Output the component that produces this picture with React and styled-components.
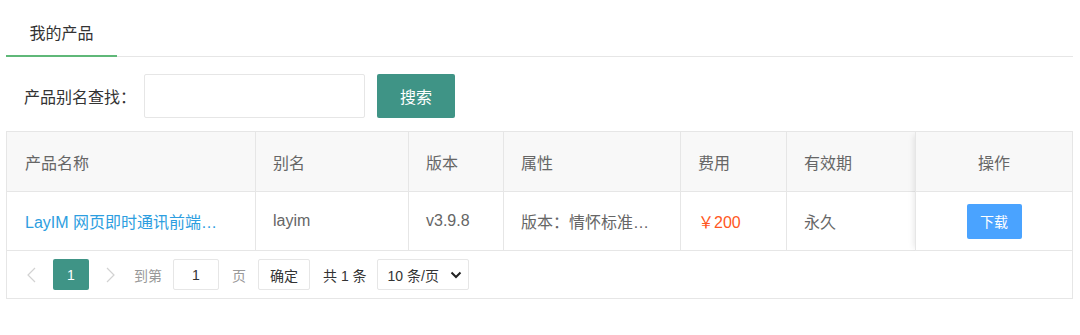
import React from "react";
import styled, { createGlobalStyle } from "styled-components";

const GlobalStyle = createGlobalStyle`
  body {
    margin: 0;
    background: #fff;
    font-family: "Liberation Sans", "Noto Sans CJK SC", sans-serif;
    color: #333;
  }
`;

const Page = styled.div`
  width: 1067px;
  margin-left: 6px;
`;

const TabBar = styled.div`
  display: flex;
  height: 56px;
  border-bottom: 1px solid #e6e6e6;
`;

const Tab = styled.div`
  box-sizing: border-box;
  width: 111px;
  height: 57px;
  padding-top: 22px;
  line-height: 23px;
  text-align: center;
  font-size: 16px;
  color: #333;
  border-bottom: 2px solid #5fb878;
`;

const SearchRow = styled.div`
  display: flex;
  align-items: center;
  margin-top: 17px;
  padding-left: 18px;
  height: 44px;
`;

const Label = styled.label`
  width: 120px;
  font-size: 16px;
  color: #333;
`;

const SearchInput = styled.input`
  box-sizing: border-box;
  width: 221px;
  height: 44px;
  border: 1px solid #e6e6e6;
  border-radius: 2px;
  outline: none;
`;

const TealButton = styled.button`
  margin-left: 12px;
  width: 78px;
  height: 44px;
  border: none;
  border-radius: 2px;
  background: #3f9486;
  color: #fff;
  font-size: 16px;
  font-family: inherit;
`;

const Table = styled.div`
  margin-top: 13px;
  border: 1px solid #e6e6e6;
`;

const Body = styled.div`
  display: flex;
  overflow: hidden;
`;

const Main = styled.div`
  display: grid;
  grid-template-columns: 249px 153px 95px 177px 106px 128px;
  grid-template-rows: 60px 59px;
`;

const Cell = styled.div`
  display: flex;
  align-items: center;
  box-sizing: border-box;
  padding: 0 ${(p) => (p.$padRight ? p.$padRight : 17)}px 0 ${(p) => (p.$padLeft ? p.$padLeft : 17)}px;
  font-size: 16px;
  color: #666;
  background: ${(p) => (p.$head ? "#f8f8f8" : "#fff")};
  border-right: ${(p) => (p.$last ? "none" : "1px solid #e6e6e6")};
  border-bottom: 1px solid #e6e6e6;
  justify-content: ${(p) => (p.$center ? "center" : "flex-start")};
  min-width: 0;
`;

const Ellipsis = styled.span`
  display: block;
  max-width: ${(p) => p.$max}px;
  overflow: hidden;
  white-space: nowrap;
  text-overflow: ellipsis;
`;

const LinkText = styled(Ellipsis)`
  color: #2d9ee0;
`;

const Price = styled.span`
  color: #ff5722;
  white-space: nowrap;
`;

const Fixed = styled.div`
  display: grid;
  grid-template-rows: 60px 59px;
  width: 158px;
  box-sizing: border-box;
  border-left: 1px solid #e6e6e6;
  box-shadow: -4px 0 6px -3px rgba(0, 0, 0, 0.1);
  position: relative;
`;

const BlueButton = styled.button`
  width: 55px;
  height: 35px;
  border: none;
  border-radius: 2px;
  background: #4aa3ff;
  color: #fff;
  font-size: 14px;
  font-family: inherit;
`;

const Pager = styled.div`
  display: flex;
  align-items: center;
  height: 47px;
  font-size: 14px;
  color: #333;
`;

const Arrow = styled.span`
  display: flex;
  justify-content: center;
  width: 24px;
  margin-left: ${(p) => p.$ml}px;
`;

const Current = styled.span`
  display: flex;
  align-items: center;
  justify-content: center;
  width: 36px;
  height: 31px;
  margin-left: 10px;
  border-radius: 2px;
  background: #3f9486;
  color: #fff;
`;

const PagerText = styled.span`
  margin-left: ${(p) => p.$ml}px;
  color: ${(p) => (p.$muted ? "#999" : "#333")};
`;

const PagerBox = styled.span`
  display: flex;
  align-items: center;
  justify-content: ${(p) => (p.$between ? "space-between" : "center")};
  box-sizing: border-box;
  width: ${(p) => p.$w}px;
  height: 31px;
  margin-left: ${(p) => p.$ml}px;
  padding: ${(p) => (p.$between ? "0 6px 0 10px" : "0")};
  border: 1px solid #e6e6e6;
  border-radius: 2px;
  background: #fff;
  color: #333;
`;

const Chevron = ({ dir }) => (
  <svg width="9" height="16" viewBox="0 0 9 16" fill="none">
    <polyline
      points={dir === "left" ? "8,1 1,8 8,15" : "1,1 8,8 1,15"}
      stroke="#d2d2d2"
      strokeWidth="1.2"
    />
  </svg>
);

const Down = () => (
  <svg width="12" height="8" viewBox="0 0 12 8" fill="none">
    <polyline points="1.5,1.5 6,6 10.5,1.5" stroke="#222" strokeWidth="2" />
  </svg>
);

const headers = ["产品名称", "别名", "版本", "属性", "费用", "有效期"];

const App = () => {
  return (
    <Page>
      <GlobalStyle />
      <TabBar>
        <Tab>我的产品</Tab>
      </TabBar>

      <SearchRow>
        <Label>产品别名查找：</Label>
        <SearchInput type="text" />
        <TealButton>搜索</TealButton>
      </SearchRow>

      <Table>
        <Body>
          <Main>
            {headers.map((h, i) => (
              <Cell key={h} $head $last={i === headers.length - 1} $padLeft={i === 0 ? 18 : 17}>
                {h}
              </Cell>
            ))}
            <Cell $padLeft={18}>
              <LinkText $max={200}>LayIM 网页即时通讯前端解决方案</LinkText>
            </Cell>
            <Cell>layim</Cell>
            <Cell>v3.9.8</Cell>
            <Cell $padRight={19}>
              <Ellipsis $max={141}>版本：情怀标准版（永久授权）</Ellipsis>
            </Cell>
            <Cell>
              <Price>￥200</Price>
            </Cell>
            <Cell $last>永久</Cell>
          </Main>
          <Fixed>
            <Cell $head $last $center>操作</Cell>
            <Cell $last $center>
              <BlueButton>下载</BlueButton>
            </Cell>
          </Fixed>
        </Body>

        <Pager>
          <Arrow $ml={12}>
            <Chevron dir="left" />
          </Arrow>
          <Current>1</Current>
          <Arrow $ml={9}>
            <Chevron dir="right" />
          </Arrow>
          <PagerText $ml={12} $muted>到第</PagerText>
          <PagerBox $w={46} $ml={11}>1</PagerBox>
          <PagerText $ml={13} $muted>页</PagerText>
          <PagerBox $w={52} $ml={12}>确定</PagerBox>
          <PagerText $ml={13}>共 1 条</PagerText>
          <PagerBox $w={92} $ml={10} $between>
            10 条/页
            <Down />
          </PagerBox>
        </Pager>
      </Table>
    </Page>
  );
};

export default App;
